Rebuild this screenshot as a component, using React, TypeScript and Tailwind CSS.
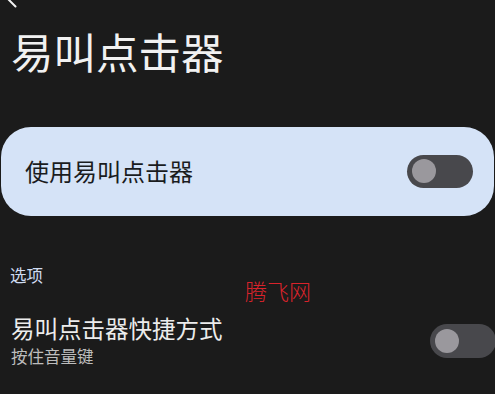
import React from 'react';

const Toggle: React.FC<{ className?: string }> = ({ className = '' }) => (
  <div className={`flex h-[33px] w-[66px] shrink-0 items-center rounded-full bg-[#48484c] px-[5px] ${className}`}>
    <div className="h-[24px] w-[24px] rounded-full bg-[#9a989d]" />
  </div>
);

const App: React.FC = () => {
  return (
    <div
      className="relative h-[394px] w-[495px] overflow-hidden bg-[#1b1b1b]"
      style={{ fontFamily: '"Noto Sans CJK SC", "Noto Sans", sans-serif' }}
    >
      <div className="h-[10px]">
        <svg width="24" height="10" viewBox="0 0 24 10" className="block">
          <path d="M7 -2 L15.5 6.5" stroke="#f2f2f2" strokeWidth="2" strokeLinecap="round" fill="none" />
        </svg>
      </div>

      <h1 className="mt-[20px] pl-[11px] text-[42.5px] leading-none text-[#f1f1f1]">易叫点击器</h1>

      <div className="mx-px mt-[54px] flex h-[89px] items-center justify-between rounded-[30px] bg-[#d5e3f7] pl-[24px] pr-[21px]">
        <span className="text-[24px] leading-none text-[#1a1c1e]">使用易叫点击器</span>
        <Toggle />
      </div>

      <div className="mt-[51px] pl-[10px] text-[16.5px] leading-none text-[#cfdcf1]">选项</div>

      <div className="mt-[34px] flex items-center justify-between pl-[11px]">
        <div className="flex flex-col">
          <span className="text-[23.5px] leading-none text-[#ececec]">易叫点击器快捷方式</span>
          <span className="mt-[7px] text-[16.5px] leading-none text-[#bdbdbd]">按住音量键</span>
        </div>
        <Toggle className="-mr-[1px] h-[34px]" />
      </div>

      <div className="absolute left-[245px] top-[279px] text-[22px] font-light leading-none text-[#d9232b]">
        腾飞网
      </div>
    </div>
  );
};

export default App;
